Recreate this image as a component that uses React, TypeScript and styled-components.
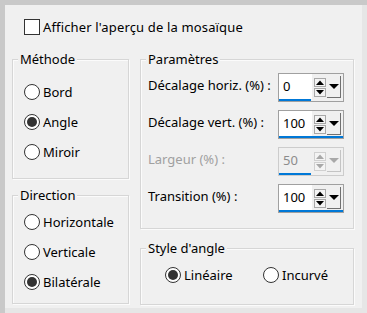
import React from 'react';
import styled, { createGlobalStyle } from 'styled-components';

const Global = createGlobalStyle`
  html, body { margin: 0; padding: 0; background: #e6e6e6; }
  body { font-family: "Noto Sans", "Open Sans", sans-serif; font-size: 13px; color: #000; }
`;

const Frame = styled.div`
  width: 367px;
  height: 313px;
  box-sizing: border-box;
  border-left: 5px solid #c9c9c9;
  border-top: 5px solid #c9c9c9;
  background: #e6e6e6;
  padding: 0 5px 5px 0;
`;

const Panel = styled.div`
  height: 100%;
  box-sizing: border-box;
  background: #f0f0f0;
  padding: 14px 0 0 7px;
`;

const CheckRow = styled.label`
  display: flex;
  align-items: center;
  gap: 3px;
  margin-left: 12px;
  height: 16px;
  line-height: 17px;
  letter-spacing: 0.15px;
`;

const CheckBox = styled.span`
  width: 16px;
  height: 16px;
  box-sizing: border-box;
  border: 1px solid #333;
  background: #fff;
  flex: none;
`;

const Columns = styled.div`
  display: flex;
  gap: 11px;
  margin-top: 24px;
`;

const Column = styled.div<{ $w: number; $gap: number }>`
  width: ${p => p.$w}px;
  display: flex;
  flex-direction: column;
  gap: ${p => p.$gap}px;
`;

const GroupBox = styled.div<{ $h: number; $pt: number; $pl: number }>`
  position: relative;
  height: ${p => p.$h}px;
  box-sizing: border-box;
  border: 1px solid #d6d6d6;
  box-shadow: 1px 1px 0 #fbfbfb, inset 1px 1px 0 #fbfbfb;
  padding: ${p => p.$pt}px 0 0 ${p => p.$pl}px;
`;

const GroupTitle = styled.span`
  position: absolute;
  top: -9px;
  left: 5px;
  padding: 0 2px;
  background: #f0f0f0;
  line-height: 17px;
`;

const RadioRow = styled.label`
  display: flex;
  align-items: center;
  gap: 3px;
  height: 30px;
  line-height: 17px;
`;

const RadioInline = styled.div`
  display: flex;
`;

const RadioOption = styled.label<{ $w?: number }>`
  display: flex;
  align-items: center;
  gap: 3px;
  height: 30px;
  line-height: 17px;
  width: ${p => (p.$w ? `${p.$w}px` : 'auto')};
`;

const RadioCircle = styled.span<{ $on?: boolean }>`
  width: 16px;
  height: 16px;
  box-sizing: border-box;
  border: 1px solid #333;
  border-radius: 50%;
  background: #fff;
  display: grid;
  place-items: center;
  flex: none;
  &::after {
    content: '';
    width: 10px;
    height: 10px;
    border-radius: 50%;
    background: ${p => (p.$on ? '#333' : 'transparent')};
  }
`;

const ParamRows = styled.div`
  display: flex;
  flex-direction: column;
  gap: 8px;
  padding-right: 9px;
`;

const ParamRow = styled.div`
  display: flex;
  justify-content: space-between;
  align-items: flex-start;
  height: 29px;
`;

const ParamLabel = styled.span<{ $off?: boolean }>`
  padding-top: 4px;
  line-height: 17px;
  color: ${p => (p.$off ? '#a0a0a0' : '#000')};
`;

const SpinBox = styled.div<{ $off?: boolean }>`
  width: 66px;
  height: 29px;
  box-sizing: border-box;
  border: 1px solid ${p => (p.$off ? '#cccccc' : '#a0a0a0')};
  background: #f0f0f0;
  display: flex;
  flex-direction: column;
`;

const SpinTop = styled.div`
  flex: 1;
  display: flex;
`;

const Edit = styled.div<{ $off?: boolean }>`
  width: 33px;
  box-sizing: border-box;
  padding-left: 4px;
  background: ${p => (p.$off ? '#f0f0f0' : '#fff')};
  color: ${p => (p.$off ? '#8c8c8c' : '#000')};
  font-size: 13px;
  line-height: 25px;
`;

const SpinButtons = styled.div`
  display: flex;
  flex-direction: column;
  gap: 1px;
  margin: 4px 0 0 2px;
`;

const SpinButton = styled.div<{ $off?: boolean }>`
  width: 12px;
  height: 9px;
  box-sizing: border-box;
  border: 1px solid ${p => (p.$off ? '#d0d0d0' : '#a8a8a8')};
  background: #f4f4f4;
  display: grid;
  place-items: center;
`;

const DropButton = styled.div<{ $off?: boolean }>`
  width: 14px;
  height: 22px;
  margin: 2px 0 0 1px;
  box-sizing: border-box;
  border-right: 1px solid ${p => (p.$off ? '#c4c4c4' : '#707070')};
  border-bottom: 1px solid ${p => (p.$off ? '#c4c4c4' : '#707070')};
  display: flex;
  justify-content: center;
  padding-top: 8px;
`;

const Bar = styled.div`
  height: 3px;
  background: #0078d7;
`;

type SpinProps = { value: string; pct: number; off?: boolean };

function Spinner({ value, pct, off }: SpinProps) {
  const c = off ? '#a8a8a8' : '#000';
  return (
    <SpinBox $off={off}>
      <SpinTop>
        <Edit $off={off}>{value}</Edit>
        <SpinButtons>
          <SpinButton $off={off}>
            <svg width="8" height="5" viewBox="0 0 8 5"><polygon points="0,5 4,0.5 8,5" fill={c} /></svg>
          </SpinButton>
          <SpinButton $off={off}>
            <svg width="8" height="5" viewBox="0 0 8 5"><polygon points="0,0 8,0 4,4.5" fill={c} /></svg>
          </SpinButton>
        </SpinButtons>
        <DropButton $off={off}>
          <svg width="10" height="5" viewBox="0 0 10 5"><polygon points="0,0 10,0 5,5" fill={c} /></svg>
        </DropButton>
      </SpinTop>
      <Bar style={{ width: `${pct}%` }} />
    </SpinBox>
  );
}

const params = [
  { label: 'Décalage horiz. (%) :', value: '0', pct: 50 },
  { label: 'Décalage vert. (%) :', value: '100', pct: 100 },
  { label: 'Largeur (%) :', value: '50', pct: 50, off: true },
  { label: 'Transition (%) :', value: '100', pct: 100 },
];

export default function App() {
  return (
    <>
      <Global />
      <Frame>
        <Panel>
          <CheckRow>
            <CheckBox />
            <span>Afficher l'aperçu de la mosaïque</span>
          </CheckRow>
          <Columns>
            <Column $w={117} $gap={16}>
              <GroupBox $h={120} $pt={17} $pl={11}>
                <GroupTitle>Méthode</GroupTitle>
                <RadioRow><RadioCircle />Bord</RadioRow>
                <RadioRow><RadioCircle $on />Angle</RadioRow>
                <RadioRow><RadioCircle />Miroir</RadioRow>
              </GroupBox>
              <GroupBox $h={109} $pt={11} $pl={11}>
                <GroupTitle>Direction</GroupTitle>
                <RadioRow><RadioCircle />Horizontale</RadioRow>
                <RadioRow><RadioCircle />Verticale</RadioRow>
                <RadioRow><RadioCircle $on />Bilatérale</RadioRow>
              </GroupBox>
            </Column>
            <Column $w={214} $gap={19}>
              <GroupBox $h={170} $pt={13} $pl={7}>
                <GroupTitle>Paramètres</GroupTitle>
                <ParamRows>
                  {params.map(p => (
                    <ParamRow key={p.label}>
                      <ParamLabel $off={p.off}>{p.label}</ParamLabel>
                      <Spinner value={p.value} pct={p.pct} off={p.off} />
                    </ParamRow>
                  ))}
                </ParamRows>
              </GroupBox>
              <GroupBox $h={57} $pt={11} $pl={24}>
                <GroupTitle>Style d'angle</GroupTitle>
                <RadioInline>
                  <RadioOption $w={98}><RadioCircle $on />Linéaire</RadioOption>
                  <RadioOption><RadioCircle />Incurvé</RadioOption>
                </RadioInline>
              </GroupBox>
            </Column>
          </Columns>
        </Panel>
      </Frame>
    </>
  );
}
